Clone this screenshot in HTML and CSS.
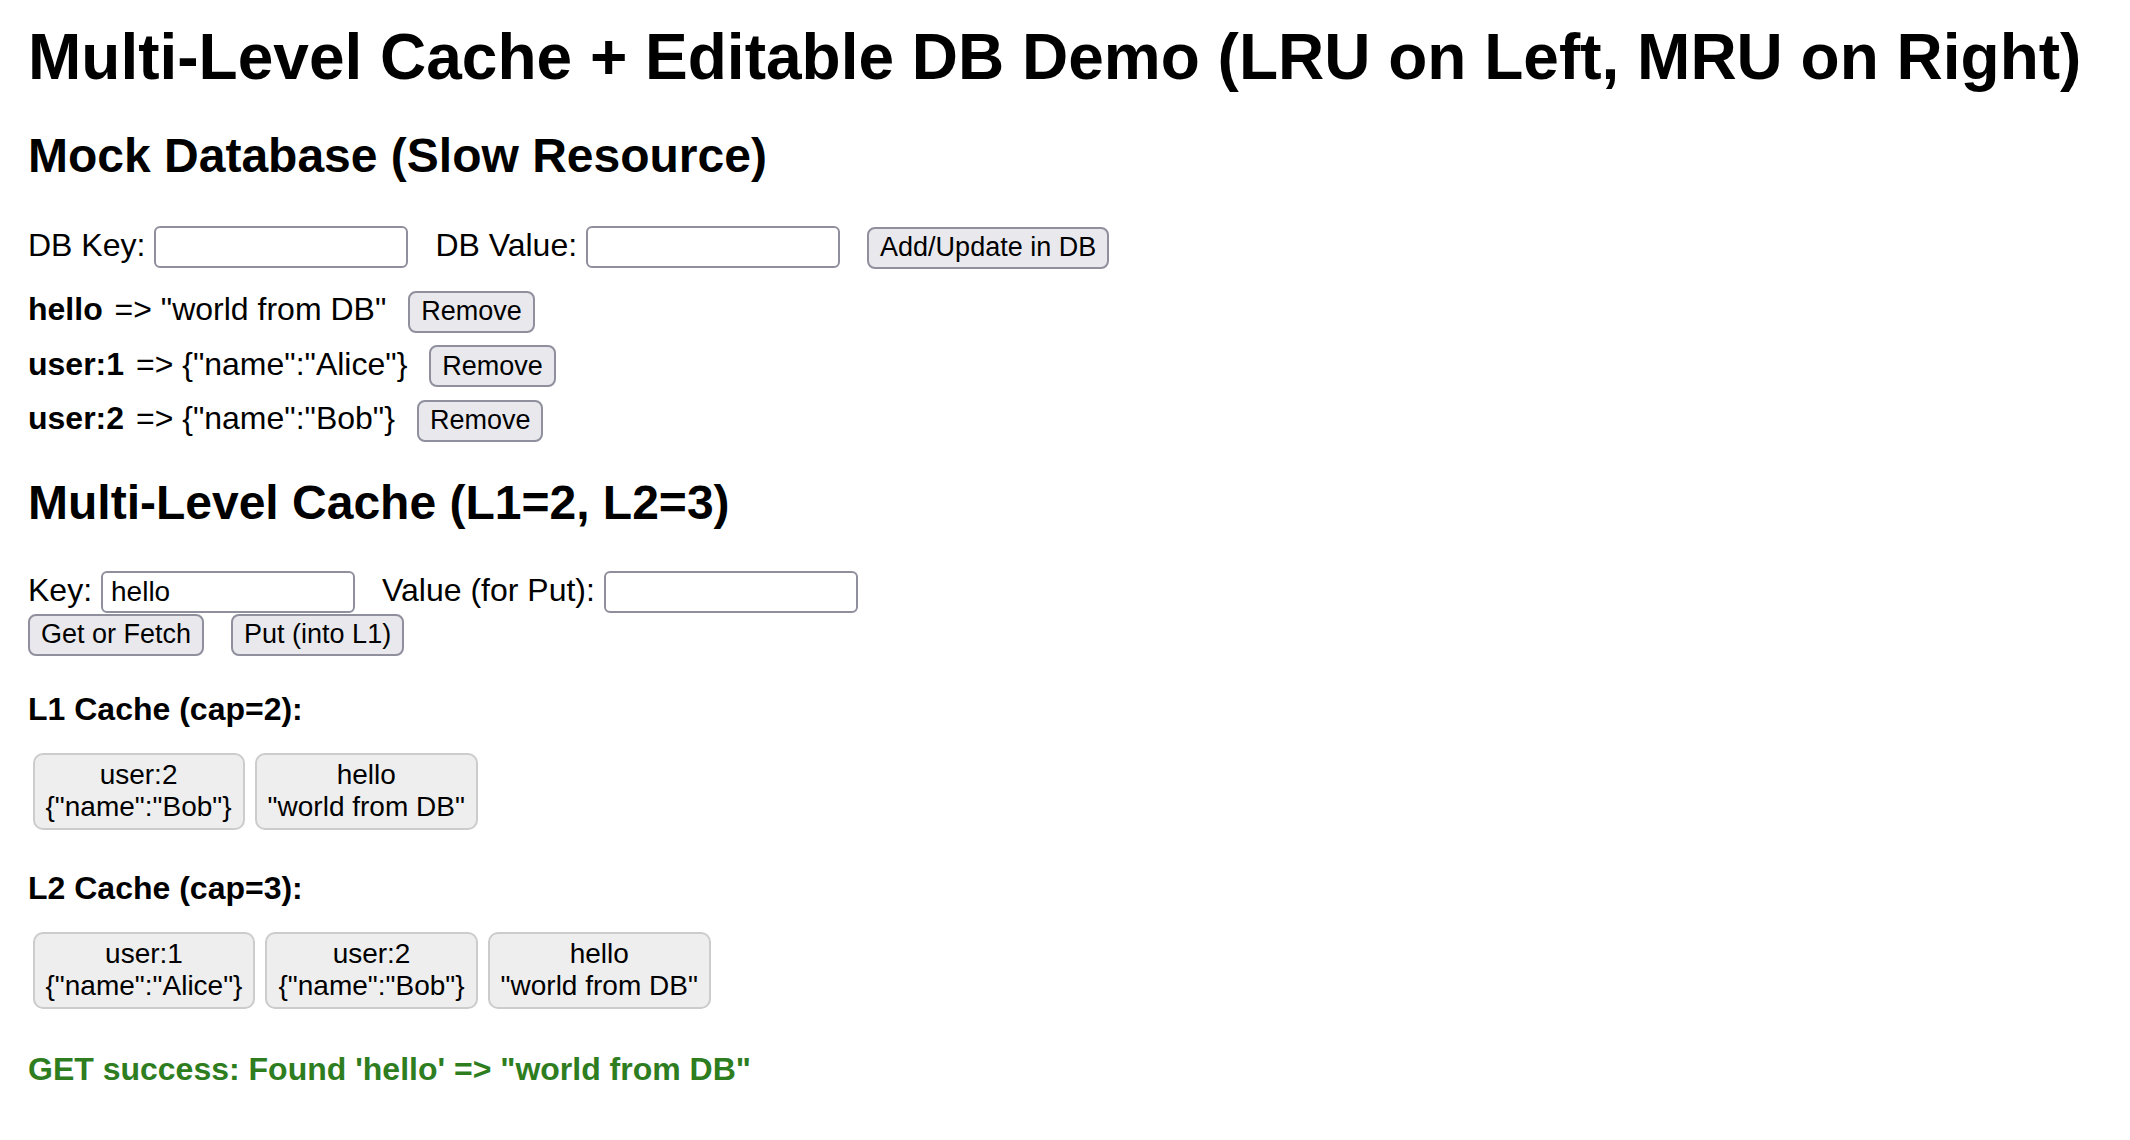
FILE: index.html
```html
<!DOCTYPE html>
<html lang="en">
<head>
<meta charset="utf-8">
<title>Multi-Level Cache + Editable DB Demo</title>
<link rel="stylesheet" href="styles.css">
</head>
<body>
  <h1 class="title">Multi-Level Cache + Editable DB Demo (LRU on Left, MRU on Right)</h1>

  <h2 class="section">Mock Database (Slow Resource)</h2>
  <div class="form-row db-form">
    <label class="lbl">DB Key:</label>
    <input class="field" type="text">
    <label class="lbl">DB Value:</label>
    <input class="field" type="text">
    <button class="btn">Add/Update in DB</button>
  </div>

  <div class="db-list">
    <div class="db-entry">
      <span class="entry-text"><strong class="entry-key">hello</strong> =&gt; "world from DB"</span>
      <button class="btn btn-remove">Remove</button>
    </div>
    <div class="db-entry">
      <span class="entry-text"><strong class="entry-key">user:1</strong> =&gt; {"name":"Alice"}</span>
      <button class="btn btn-remove">Remove</button>
    </div>
    <div class="db-entry">
      <span class="entry-text"><strong class="entry-key">user:2</strong> =&gt; {"name":"Bob"}</span>
      <button class="btn btn-remove">Remove</button>
    </div>
  </div>

  <h2 class="section section-cache">Multi-Level Cache (L1=2, L2=3)</h2>
  <div class="form-row cache-form">
    <label class="lbl">Key:</label>
    <input class="field" type="text" value="hello">
    <label class="lbl">Value (for Put):</label>
    <input class="field" type="text">
  </div>
  <div class="actions">
    <button class="btn">Get or Fetch</button>
    <button class="btn">Put (into L1)</button>
  </div>

  <h4 class="cache-title cache-title-l1">L1 Cache (cap=2):</h4>
  <div class="cache-row">
    <div class="cache-item">user:2<br>{"name":"Bob"}</div>
    <div class="cache-item">hello<br>"world from DB"</div>
  </div>

  <h4 class="cache-title cache-title-l2">L2 Cache (cap=3):</h4>
  <div class="cache-row">
    <div class="cache-item">user:1<br>{"name":"Alice"}</div>
    <div class="cache-item">user:2<br>{"name":"Bob"}</div>
    <div class="cache-item">hello<br>"world from DB"</div>
  </div>

  <div class="message">GET success: Found 'hello' =&gt; "world from DB"</div>
</body>
</html>
```

FILE: styles.css
```css
html, body {
  background: #ffffff;
}

body {
  margin: 0;
  padding: 20px 28px;
  font-family: "Liberation Sans", Arial, sans-serif;
  font-size: 32px;
  color: #000000;
}

.title {
  margin: 0;
  font-size: 64px;
  line-height: 74px;
  font-weight: bold;
}

.section {
  margin: 34px 0 0;
  font-size: 48px;
  line-height: 56px;
  font-weight: bold;
}

.section-cache {
  margin-top: 33px;
}

.form-row {
  display: flex;
  align-items: baseline;
}

.db-form {
  margin-top: 42px;
}

.cache-form {
  margin-top: 40px;
}

.lbl {
  margin-right: 9px;
  line-height: normal;
}

.field {
  box-sizing: border-box;
  width: 254px;
  height: 42px;
  margin: 0 27px 0 0;
  padding: 0 8px;
  border: 2px solid #8f8f9d;
  border-radius: 6px;
  background: #ffffff;
  font-family: "Liberation Sans", Arial, sans-serif;
  font-size: 28px;
  color: #000000;
  outline: none;
}

.btn {
  box-sizing: border-box;
  height: 42px;
  margin: 0 27px 0 0;
  padding: 0 11px;
  border: 2px solid #8f8f9d;
  border-radius: 8px;
  background: #e9e9ed;
  font-family: "Liberation Sans", Arial, sans-serif;
  font-size: 27px;
  color: #000000;
  cursor: pointer;
}

.db-list {
  margin-top: 22px;
  display: flex;
  flex-direction: column;
  gap: 12.5px;
}

.db-entry {
  display: flex;
  align-items: baseline;
}

.entry-text {
  line-height: normal;
  white-space: pre;
}

.entry-key {
  margin-right: 3px;
}

.btn-remove {
  margin-left: 22px;
  margin-right: 0;
}

.actions {
  display: flex;
  margin-top: 1px;
}

.cache-title {
  margin: 35px 0 0;
  font-size: 32px;
  line-height: 37px;
  font-weight: bold;
}

.cache-title-l2 {
  margin-top: 40px;
}

.cache-row {
  display: flex;
  gap: 10px;
  margin-top: 25px;
  padding-left: 4.5px;
}

.cache-item {
  padding: 4px 11px;
  border: 2px solid #cccccc;
  border-radius: 10px;
  background: #eeeeee;
  font-size: 28px;
  line-height: 32.5px;
  text-align: center;
}

.message {
  margin-top: 42px;
  font-size: 32px;
  line-height: 37px;
  font-weight: bold;
  color: #2e7d1f;
}
```
